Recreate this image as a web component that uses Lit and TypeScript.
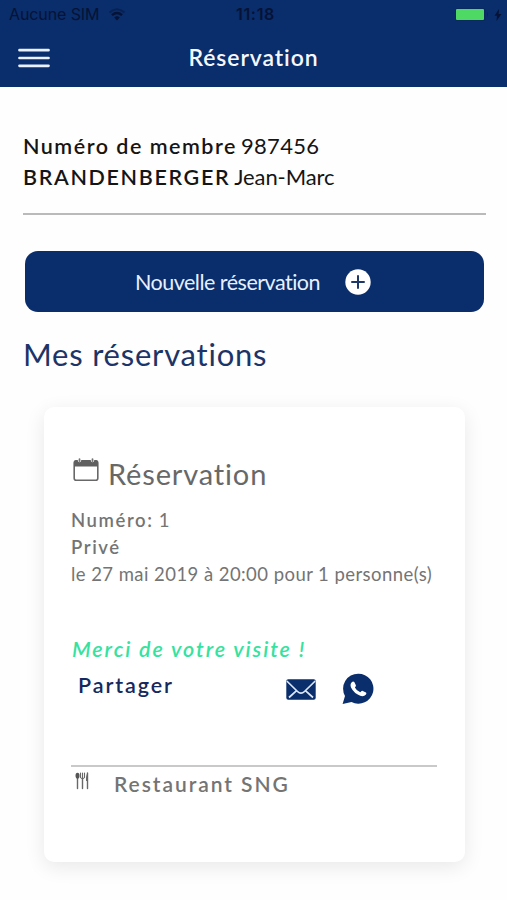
import { LitElement, html, css } from "lit";

class AppRoot extends LitElement {
  static styles = css`
    * { box-sizing: border-box; }
    :host {
      display: block;
      width: 100%;
      height: 900px;
      overflow: hidden;
      background: #fefefe;
      color: #151515;
      font-family: "Lato", sans-serif;
      font-variant-ligatures: none;
      white-space: nowrap;
    }
    svg { display: block; flex: none; }
    .top { height: 87px; background: #0a2d6b; }
    .status {
      height: 29px;
      display: grid;
      grid-template-columns: 1fr auto 1fr;
      align-items: center;
      padding: 0 5px 0 9px;
      font: 16px/29px "Inter", sans-serif;
      color: #061336;
    }
    .carrier { display: flex; align-items: center; gap: 9px; letter-spacing: -0.1px; }
    .clock { font-weight: 600; letter-spacing: 0.7px; }
    .power { display: flex; justify-content: flex-end; align-items: center; gap: 4px; }
    .power svg:first-child { margin-right: 1px; }
    .nav {
      height: 57px;
      display: grid;
      grid-template-columns: 1fr auto 1fr;
      align-items: center;
      padding: 0 18px;
      color: #f4f8ff;
    }
    .nav-title { font-size: 23px; font-weight: 600; line-height: 57px; letter-spacing: 0.9px; }
    .page { padding: 43px 21px 0 23px; }
    .member { height: 85px; border-bottom: 2px solid #bababa; font-size: 22px; line-height: 31px; }
    .line { display: flex; align-items: baseline; height: 31px; gap: 4px; }
    .strong { font-weight: 600; font-size: 21.5px; }
    .s1 { letter-spacing: 1.5px; }
    .s2 { letter-spacing: 1.65px; }
    .s3 { letter-spacing: 0.3px; }
    .s4 { letter-spacing: -0.1px; }
    .new {
      display: flex;
      justify-content: center;
      align-items: center;
      gap: 25px;
      width: 459px;
      height: 61px;
      margin: 36px 0 0 2px;
      padding: 0 3px 0 0;
      border: 0;
      border-radius: 13px;
      background: #0a2d6b;
      color: #e6f0ff;
      font: 21.5px/60px "Lato", sans-serif;
      letter-spacing: -0.5px;
    }
    h1 { margin: 22px 0 0; font-size: 31px; line-height: 40px; font-weight: 400; letter-spacing: 0.78px; color: #1c3467; }
    .card {
      width: 421px;
      height: 455px;
      margin: 33px 0 0 20.5px;
      padding: 49px 27px 0 27.5px;
      border-radius: 10px;
      background: #fff;
      box-shadow: 0 5px 20px rgba(0, 0, 0, 0.09);
      color: #686868;
    }
    .head { display: flex; gap: 9px; height: 51px; }
    .head svg { margin: 2px 0 0 2px; }
    h2 { margin: 0; font-size: 29px; line-height: 36px; font-weight: 400; letter-spacing: 0.85px; }
    .info { font-size: 18.5px; line-height: 27px; letter-spacing: 0.44px; color: #747474; }
    .info b { font-weight: 600; letter-spacing: 1.6px; }
    .thanks { margin: 41px 0 0 1px; font-size: 21.5px; line-height: 40px; font-style: italic; font-weight: 600; letter-spacing: 1.9px; color: #36e2a0; }
    .share { display: flex; height: 96px; color: #14295e; }
    .share-label { width: 215px; padding-left: 7px; font-size: 21.5px; font-weight: 600; line-height: 33px; letter-spacing: 1.9px; }
    .mail { margin: 10px 26px 0 0; }
    .wa { margin-top: 4px; }
    .place { display: flex; border-top: 2px solid #c9c9c9; gap: 24px; padding: 0 0 0 4px; width: 366px; }
    .place svg { margin-top: 5px; }
    .place-name { font-size: 21px; line-height: 34px; font-weight: 600; letter-spacing: 1.95px; color: #747474; }
  `;

  render() {
    return html`
      <header class="top">
        <div class="status">
          <span class="carrier">Aucune SIM
            <svg width="18" height="13" viewBox="0 0 18 13" fill="none" stroke="#061336">
              <path d="M1.5 4.5Q9-2 16.5 4.5" stroke-width="2" opacity=".45" />
              <path d="M4 7.2Q9 3 14 7.2" stroke-width="2.4" />
              <path d="M6.2 9.5Q9 7.2 11.8 9.5L9 12.5z" fill="#061336" stroke="none" />
            </svg>
          </span>
          <span class="clock">11:18</span>
          <span class="power">
            <svg width="34" height="15" viewBox="0 0 34 15">
              <rect x=".5" y="1" width="30" height="13" rx="2.5" fill="#082a5d" />
              <rect x="1" y="2" width="28" height="11" rx="1" fill="#4ed964" />
              <path d="M32 5v5q2-2.500 0-5" fill="#08265c" />
            </svg>
            <svg width="8" height="12" viewBox="0 0 8 12"><path d="M5 0L.5 6.700H3L2.500 12L7.500 5H4.600z" fill="#061336" /></svg>
          </span>
        </div>
        <div class="nav">
          <svg width="32" height="22" viewBox="0 0 32 22" stroke="#eaf2ff" stroke-width="2.700" stroke-linecap="round">
            <path d="M1.500 3.200H30.500M1.500 11H30.500M1.500 18.800H30.500" />
          </svg>
          <span class="nav-title">Réservation</span>
        </div>
      </header>
      <main class="page">
        <section class="member">
          <div class="line"><span class="strong s1">Numéro de membre</span><span class="s3">987456</span></div>
          <div class="line"><span class="strong s2">BRANDENBERGER</span><span class="s4">Jean-Marc</span></div>
        </section>
        <button class="new">Nouvelle réservation
          <svg width="26" height="26" viewBox="0 0 26 26">
            <circle cx="13" cy="13" r="12.700" fill="#fff" />
            <path d="M13 7v12M7 13h12" stroke="#1d3769" stroke-width="2" stroke-linecap="round" />
          </svg>
        </button>
        <h1>Mes réservations</h1>
        <article class="card">
          <div class="head">
            <svg width="26" height="24" viewBox="0 0 26 24">
              <rect x="1.200" y="3" width="23.600" height="19.300" rx="2" fill="none" stroke="#686868" stroke-width="1.600" />
              <path d="M1 4Q1 2 3 2H23Q25 2 25 4V8.500H1z" fill="#606060" />
              <path d="M6.500 1v1.500M19.500 1v1.500" stroke="#fff" stroke-width="3.400" stroke-linecap="round" />
              <path d="M6.500 1.200v1.800M19.500 1.200v1.800" stroke="#747474" stroke-width="1.800" stroke-linecap="round" />
            </svg>
            <h2>Réservation</h2>
          </div>
          <div class="info"><b>Numéro:</b> 1</div>
          <div class="info"><b>Privé</b></div>
          <div class="info">le 27 mai 2019 à 20:00 pour 1 personne(s)</div>
          <div class="thanks">Merci de votre visite !</div>
          <div class="share">
            <span class="share-label">Partager</span>
            <svg class="mail" width="30" height="21" viewBox="0 0 30 21">
              <rect x=".3" y=".3" width="29.400" height="20.400" rx="2" fill="#0a2d6b" />
              <path d="M.8 2L11.500 12.500Q15 15.800 18.500 12.500L29.200 2M10.300 11.800L3 18.500M19.700 11.800L27 18.500" fill="none" stroke="#dce8fa" stroke-width="1.700" />
            </svg>
            <svg class="wa" width="32" height="32" viewBox="0 0 32 32">
              <path d="M16.300 .7A15 15 0 1 1 9.500 29L.6 31L3 23A15 15 0 0 1 16.300 .7z" fill="#0a2d6b" />
              <path d="M9.800 9.200Q11 8 12.300 9L13.900 12.200Q14.200 13.200 12.900 14.600Q14.500 18 18.300 19.300Q20 17.600 20.800 17.900L24 19.600Q24.800 20.200 24 21.400Q21.800 24 18.200 22.800Q12 20.500 9 14.600Q7.800 11 9.800 9.200z" fill="#fff" />
            </svg>
          </div>
          <div class="place">
            <svg width="15" height="18" viewBox="0 0 15 18" fill="none" stroke="#686868" stroke-width="1.400" stroke-linecap="round">
              <path d="M2.500 6v10.500M7.500 7v9.500M12.500 1v15.500" />
              <ellipse cx="2.500" cy="3.800" rx="1.300" ry="2.300" fill="#555" stroke="#555" />
              <path d="M5.500 1v4.500Q7.500 8 9.500 5.500V1M7.500 1v6" stroke-width="1.100" />
              <path d="M12.500 1Q10.800 3 11 9h1.500z" fill="#686868" stroke="none" />
            </svg>
            <span class="place-name">Restaurant SNG</span>
          </div>
        </article>
      </main>
    `;
  }
}
customElements.define("app-root", AppRoot);
